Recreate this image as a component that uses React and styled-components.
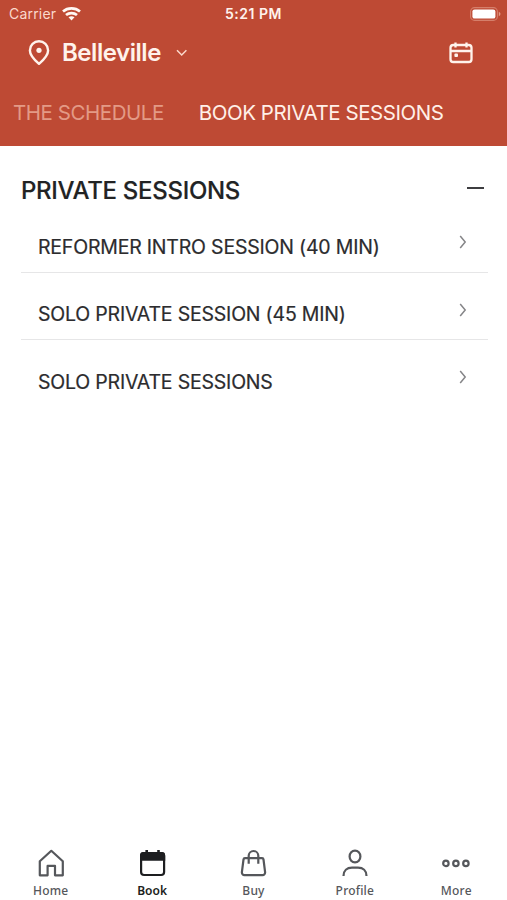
import styled, { createGlobalStyle } from "styled-components"

const GlobalStyle = createGlobalStyle`
    * {
        box-sizing: border-box;
    }
    body {
        margin: 0;
        background-color: #fff;
        font-family: Inter, "Liberation Sans", sans-serif;
    }
    svg {
        display: block;
        flex: none;
    }
`
const Container = styled.div`
    width: 100%;
    height: 100vh;
    display: flex;
    flex-direction: column;
    overflow: hidden;
`
const Header = styled.header`
    height: 146px;
    flex: none;
    background-color: #be4a34;
    color: #fff3ec;
`
const StatusBar = styled.div`
    height: 27px;
    padding: 0 6px 0 9px;
    display: grid;
    grid-template-columns: 1fr auto 1fr;
    align-items: center;
`
const Carrier = styled.div`
    display: flex;
    align-items: center;
    gap: 6px;
    font-size: 14px;
    letter-spacing: 0.2px;
    color: #fbd9cc;
`
const Time = styled.div`
    margin-right: 3px;
    font-size: 14px;
    font-weight: 600;
    letter-spacing: 0.5px;
`
const Battery = styled.div`
    justify-self: end;
`
const LocationBar = styled.div`
    height: 51px;
    padding: 0 34px 0 28px;
    display: flex;
    align-items: center;
`
const LocationName = styled.h1`
    margin: 0 15px 0 12px;
    font-size: 24px;
    line-height: 30px;
    font-weight: 600;
    letter-spacing: -0.45px;
`
const CalendarButton = styled.div`
    margin-left: auto;
`
const Tabs = styled.nav`
    height: 68px;
    padding-left: 13px;
    display: flex;
    align-items: center;
    gap: 35px;
`
const Tab = styled.div`
    font-size: 20.5px;
    letter-spacing: -0.45px;
    white-space: nowrap;
    color: ${(props) => (props.$active ? "#fff0e8" : "#e39a86")};
`
const Content = styled.main`
    flex: 1;
    padding: 0 19px 0 21px;
`
const SectionHeader = styled.div`
    height: 59px;
    padding: 15px 4px 0 0;
    display: flex;
    align-items: flex-start;
    justify-content: space-between;
`
const SectionTitle = styled.h2`
    margin: 15px 0 0;
    font-size: 24px;
    line-height: 30px;
    font-weight: 500;
    letter-spacing: -0.3px;
    color: #222324;
    -webkit-text-stroke: 0.15px #222324;
`
const Minus = styled.div`
    width: 17px;
    height: 2px;
    margin-top: 26px;
    background-color: #3d3d40;
`
const Session = styled.div`
    height: 67.5px;
    padding: 0 21px 0 17px;
    display: flex;
    align-items: flex-start;
    justify-content: space-between;
    border-bottom: 1px solid ${(props) => (props.$last ? "transparent" : "#e6e6e7")};
`
const SessionName = styled.div`
    margin-top: 28.5px;
    font-size: 19.5px;
    line-height: 26px;
    letter-spacing: -0.2px;
    color: #2c2c2e;
    -webkit-text-stroke: 0.2px #2c2c2e;
`
const Arrow = styled.div`
    margin-top: 30px;
`
const BottomNav = styled.nav`
    height: 60px;
    flex: none;
    display: grid;
    grid-template-columns: repeat(5, 1fr);
`
const NavItem = styled.div`
    display: flex;
    flex-direction: column;
    align-items: center;
    padding-top: 8px;
    color: ${(props) => (props.$active ? "#1d1e20" : "#55575b")};
`
const NavLabel = styled.span`
    margin-top: 5px;
    font-family: "Noto Sans", sans-serif;
    font-size: 12px;
    line-height: 16px;
    font-weight: ${(props) => (props.$active ? 600 : 500)};
    letter-spacing: ${(props) => (props.$active ? "0" : "0.2px")};
`

const tabs = ["THE SCHEDULE", "BOOK PRIVATE SESSIONS"]

const sessions = [
  "REFORMER INTRO SESSION (40 MIN)",
  "SOLO PRIVATE SESSION (45 MIN)",
  "SOLO PRIVATE SESSIONS",
]

const WifiIcon = () => (
  <svg width="19" height="14" viewBox="0 0 19 14" fill="none" stroke="#fff8f4" strokeWidth="2.7">
    <path d="M1 4.6C5.8 .4 13.2 .4 18 4.6" />
    <path d="M4 8.1c3.1-2.7 7.9-2.7 11 0" />
    <path d="M6.5 10.3c1.8-1.3 4.2-1.3 6 0L9.5 13.6z" fill="#fff8f4" stroke="none" />
  </svg>
)

const BatteryIcon = () => (
  <svg width="31" height="14" viewBox="0 0 31 14">
    <rect x=".6" y=".6" width="26.8" height="12.8" rx="4" fill="none" stroke="#d57f6b" strokeWidth="1.1" />
    <rect x="2.4" y="2.4" width="23" height="9.2" rx="2.2" fill="#fff" />
    <path d="M28.8 4.8c2.2.9 2.2 3.5 0 4.4z" fill="#e29a86" />
  </svg>
)

const PinIcon = () => (
  <svg width="22" height="26" viewBox="0 0 22 26" fill="none" stroke="#fff3ec" strokeWidth="2.4">
    <path d="M11 23.8C8.5 21.6 1.9 16 1.9 10.4a9.1 9.1 0 0 1 18.2 0C20.1 16 13.5 21.6 11 23.8z" strokeLinejoin="round" />
    <circle cx="11" cy="10.3" r="2.6" fill="#fff3ec" stroke="none" />
  </svg>
)

const ChevronDown = () => (
  <svg width="12" height="8" viewBox="0 0 12 8" fill="none" stroke="#fbd9cc" strokeWidth="1.5">
    <path d="M1 1.3l4.7 4.7 4.7-4.7" />
  </svg>
)

const CalendarIcon = () => (
  <svg width="24" height="22" viewBox="0 0 24 22" fill="none" stroke="#fff3ec" strokeWidth="2.3">
    <rect x="1.5" y="3" width="21" height="17" rx="2.8" />
    <path d="M1.5 9h21M6.5 .5v5M17.5 .5v5" />
    <rect x="5.4" y="11.5" width="3.6" height="3.6" rx="1" fill="#fff3ec" stroke="none" />
  </svg>
)

const ChevronRight = () => (
  <svg width="8" height="14" viewBox="0 0 8 14" fill="none" stroke="#858588" strokeWidth="1.5">
    <path d="M1.2 1l5 6-5 6" />
  </svg>
)

const HomeIcon = () => (
  <svg width="28" height="30" viewBox="0 0 28 30" fill="none" stroke="currentColor" strokeWidth="2.2">
    <path d="M2.8 13.2L14.3 2.8l11.5 10.4v14.1h-7.8v-9.4h-7.4v9.4H2.8z" strokeLinejoin="round" />
  </svg>
)

const BookIcon = () => (
  <svg width="28" height="30" viewBox="0 0 28 30" fill="none" stroke="currentColor" strokeWidth="2.2">
    <rect x="3.1" y="5" width="23" height="22" rx="3" />
    <path d="M2 12.8V7.5a3.4 3.4 0 0 1 3.4-3.4h18.4a3.4 3.4 0 0 1 3.4 3.4v5.3z" fill="currentColor" stroke="none" />
    <path d="M8.7 2v4M20.5 2v4" strokeWidth="2.6" />
  </svg>
)

const BuyIcon = () => (
  <svg width="28" height="30" viewBox="0 0 28 30" fill="none" stroke="currentColor" strokeWidth="2.2">
    <path d="M6 10.2h17a1.5 1.5 0 0 1 1.5 1.3l1.6 12.7a2.6 2.6 0 0 1-2.6 2.9h-18a2.6 2.6 0 0 1-2.6-2.9l1.6-12.7A1.5 1.5 0 0 1 6 10.2z" />
    <path d="M9.7 15.7V7.8a4.8 4.8 0 0 1 9.6 0v7.9" />
  </svg>
)

const ProfileIcon = () => (
  <svg width="28" height="30" viewBox="0 0 28 30" fill="none" stroke="currentColor" strokeWidth="2.2">
    <ellipse cx="14" cy="8.5" rx="5.4" ry="5.9" />
    <path d="M2.5 28c0-5.5 3.5-8.3 8.5-8.3h6c5 0 8.5 2.8 8.5 8.3" />
  </svg>
)

const MoreIcon = () => (
  <svg width="28" height="30" viewBox="0 0 28 30" fill="none" stroke="currentColor" strokeWidth="2.2">
    <circle cx="3.9" cy="15.4" r="2.7" />
    <circle cx="13.9" cy="15.4" r="2.7" />
    <circle cx="23.9" cy="15.4" r="2.7" />
  </svg>
)

const navItems = [
  { label: "Home", Icon: HomeIcon },
  { label: "Book", Icon: BookIcon },
  { label: "Buy", Icon: BuyIcon },
  { label: "Profile", Icon: ProfileIcon },
  { label: "More", Icon: MoreIcon },
]

const App = () => {
  return (
    <Container>
      <GlobalStyle />
      <Header>
        <StatusBar>
          <Carrier>
            Carrier
            <WifiIcon />
          </Carrier>
          <Time>5:21 PM</Time>
          <Battery>
            <BatteryIcon />
          </Battery>
        </StatusBar>
        <LocationBar>
          <PinIcon />
          <LocationName>Belleville</LocationName>
          <ChevronDown />
          <CalendarButton>
            <CalendarIcon />
          </CalendarButton>
        </LocationBar>
        <Tabs>
          {tabs.map((tab, i) => (
            <Tab key={tab} $active={i === 1}>{tab}</Tab>
          ))}
        </Tabs>
      </Header>
      <Content>
        <SectionHeader>
          <SectionTitle>PRIVATE SESSIONS</SectionTitle>
          <Minus />
        </SectionHeader>
        {sessions.map((name, i) => (
          <Session key={name} $last={i === sessions.length - 1}>
            <SessionName>{name}</SessionName>
            <Arrow>
              <ChevronRight />
            </Arrow>
          </Session>
        ))}
      </Content>
      <BottomNav>
        {navItems.map(({ label, Icon }) => (
          <NavItem key={label} $active={label === "Book"}>
            <Icon />
            <NavLabel $active={label === "Book"}>{label}</NavLabel>
          </NavItem>
        ))}
      </BottomNav>
    </Container>
  )
}

export default App
